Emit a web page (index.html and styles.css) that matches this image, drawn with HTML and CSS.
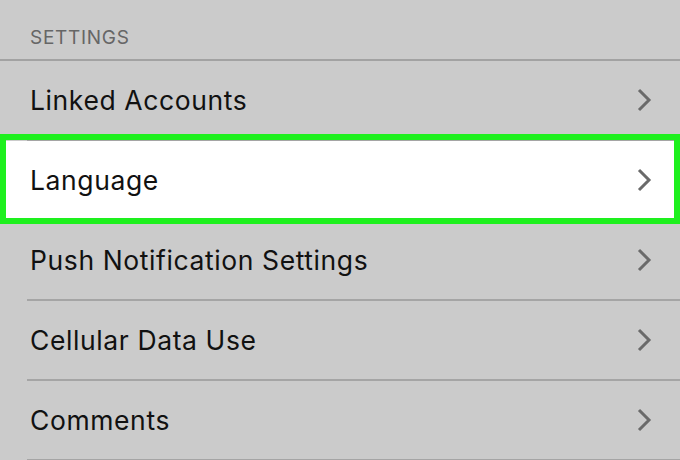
FILE: index.html
```html
<!DOCTYPE html>
<html lang="en">
<head>
    <meta charset="UTF-8">
    <meta name="viewport" content="width=device-width, initial-scale=1.0">
    <title>Settings</title>
    <link rel="stylesheet" href="styles.css">
</head>
<body>

    <div class="section-title">SETTINGS</div>

    <ul class="settings-list">
        <li class="settings-row">
            <span class="label">Linked Accounts</span>
            <svg class="chevron" viewBox="0 0 16 24"><path d="M3 2 L13 12 L3 22"/></svg>
        </li>
        <li class="settings-row selected">
            <span class="label">Language</span>
            <svg class="chevron" viewBox="0 0 16 24"><path d="M3 2 L13 12 L3 22"/></svg>
        </li>
        <li class="settings-row">
            <span class="label">Push Notification Settings</span>
            <svg class="chevron" viewBox="0 0 16 24"><path d="M3 2 L13 12 L3 22"/></svg>
        </li>
        <li class="settings-row">
            <span class="label">Cellular Data Use</span>
            <svg class="chevron" viewBox="0 0 16 24"><path d="M3 2 L13 12 L3 22"/></svg>
        </li>
        <li class="settings-row">
            <span class="label">Comments</span>
            <svg class="chevron" viewBox="0 0 16 24"><path d="M3 2 L13 12 L3 22"/></svg>
        </li>
    </ul>

</body>
</html>
```

FILE: styles.css
```css
body {
    margin: 0;
    font-family: 'Inter', 'Liberation Sans', sans-serif;
    background-color: #cbcbcb;
    color: #111;
    overflow: hidden;
}

.section-title {
    height: 59px;
    padding-left: 30px;
    padding-top: 15px;
    display: flex;
    align-items: center;
    font-size: 19px;
    letter-spacing: 0.7px;
    color: #666;
    border-bottom: 2px solid #a2a2a2;
    box-sizing: content-box;
    height: 44px;
}

.settings-list {
    list-style: none;
    margin: 0;
    padding: 0;
}

.settings-row {
    position: relative;
    height: 78px;
    margin-left: 27px;
    padding-left: 3px;
    padding-right: 28px;
    display: flex;
    align-items: center;
    justify-content: space-between;
    border-bottom: 2px solid #a5a5a5;
}

.label {
    font-size: 26.5px;
    letter-spacing: 0.6px;
}

.chevron {
    width: 16px;
    height: 24px;
    fill: none;
    stroke: #6a6a6a;
    stroke-width: 3;
}

.settings-row.selected {
    background-color: #fff;
    margin-left: 0;
    padding-left: 30px;
}

/* green highlight frame */
.settings-row.selected::after {
    content: "";
    position: absolute;
    top: -7px;
    bottom: -5px;
    left: 0;
    right: 0;
    border: 6px solid #1ef01e;
}
```
